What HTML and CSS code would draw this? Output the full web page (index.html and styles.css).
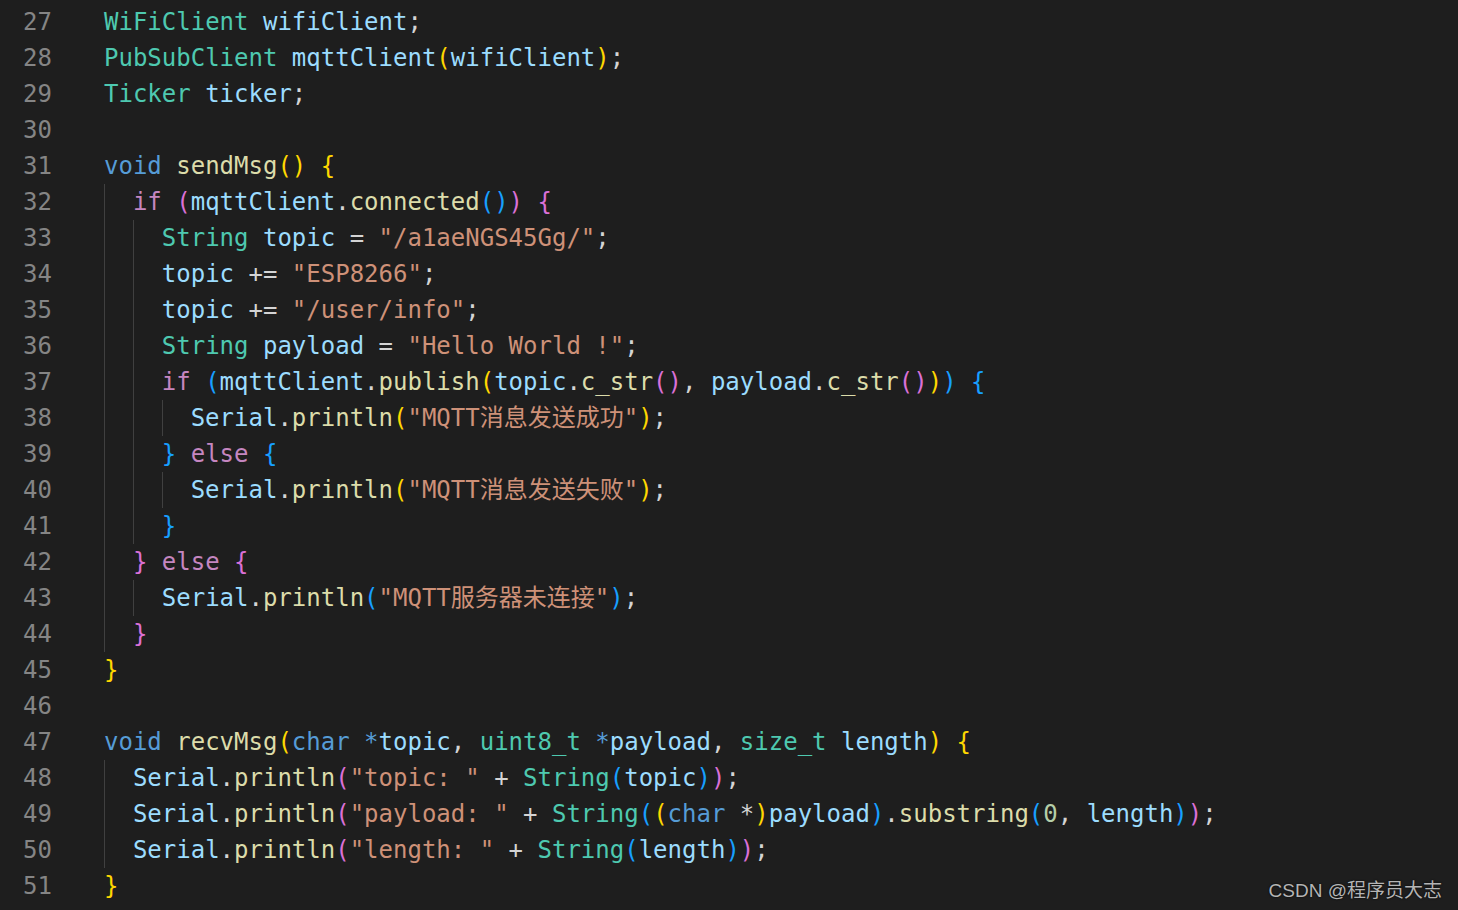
FILE: index.html
```html
<!DOCTYPE html>
<html lang="zh">
<head>
<meta charset="utf-8">
<title>code</title>
<link rel="stylesheet" href="styles.css">
</head>
<body>
<div class="editor">
  <div class="line"><span class="ln">27</span><span class="code"><span class="t">WiFiClient</span> <span class="v">wifiClient</span><span class="p">;</span></span></div>
  <div class="line"><span class="ln">28</span><span class="code"><span class="t">PubSubClient</span> <span class="v">mqttClient</span><span class="b1">(</span><span class="v">wifiClient</span><span class="b1">)</span><span class="p">;</span></span></div>
  <div class="line"><span class="ln">29</span><span class="code"><span class="t">Ticker</span> <span class="v">ticker</span><span class="p">;</span></span></div>
  <div class="line"><span class="ln">30</span><span class="code"></span></div>
  <div class="line"><span class="ln">31</span><span class="code"><span class="k">void</span> <span class="f">sendMsg</span><span class="b1">()</span> <span class="b1">{</span></span></div>
  <div class="line"><span class="ln">32</span><span class="code"><span class="ind"></span><span class="c">if</span> <span class="b2">(</span><span class="v">mqttClient</span><span class="p">.</span><span class="f">connected</span><span class="b3">()</span><span class="b2">)</span> <span class="b2">{</span></span></div>
  <div class="line"><span class="ln">33</span><span class="code"><span class="ind"></span><span class="ind"></span><span class="t">String</span> <span class="v">topic</span> <span class="p">=</span> <span class="s">"/a1aeNGS45Gg/"</span><span class="p">;</span></span></div>
  <div class="line"><span class="ln">34</span><span class="code"><span class="ind"></span><span class="ind"></span><span class="v">topic</span> <span class="p">+=</span> <span class="s">"ESP8266"</span><span class="p">;</span></span></div>
  <div class="line"><span class="ln">35</span><span class="code"><span class="ind"></span><span class="ind"></span><span class="v">topic</span> <span class="p">+=</span> <span class="s">"/user/info"</span><span class="p">;</span></span></div>
  <div class="line"><span class="ln">36</span><span class="code"><span class="ind"></span><span class="ind"></span><span class="t">String</span> <span class="v">payload</span> <span class="p">=</span> <span class="s">"Hello World !"</span><span class="p">;</span></span></div>
  <div class="line"><span class="ln">37</span><span class="code"><span class="ind"></span><span class="ind"></span><span class="c">if</span> <span class="b3">(</span><span class="v">mqttClient</span><span class="p">.</span><span class="f">publish</span><span class="b1">(</span><span class="v">topic</span><span class="p">.</span><span class="f">c_str</span><span class="b2">()</span><span class="p">,</span> <span class="v">payload</span><span class="p">.</span><span class="f">c_str</span><span class="b2">()</span><span class="b1">)</span><span class="b3">)</span> <span class="b3">{</span></span></div>
  <div class="line"><span class="ln">38</span><span class="code"><span class="ind"></span><span class="ind"></span><span class="ind"></span><span class="v">Serial</span><span class="p">.</span><span class="f">println</span><span class="b1">(</span><span class="s">"MQTT消息发送成功"</span><span class="b1">)</span><span class="p">;</span></span></div>
  <div class="line"><span class="ln">39</span><span class="code"><span class="ind"></span><span class="ind"></span><span class="b3">}</span> <span class="c">else</span> <span class="b3">{</span></span></div>
  <div class="line"><span class="ln">40</span><span class="code"><span class="ind"></span><span class="ind"></span><span class="ind"></span><span class="v">Serial</span><span class="p">.</span><span class="f">println</span><span class="b1">(</span><span class="s">"MQTT消息发送失败"</span><span class="b1">)</span><span class="p">;</span></span></div>
  <div class="line"><span class="ln">41</span><span class="code"><span class="ind"></span><span class="ind"></span><span class="b3">}</span></span></div>
  <div class="line"><span class="ln">42</span><span class="code"><span class="ind"></span><span class="b2">}</span> <span class="c">else</span> <span class="b2">{</span></span></div>
  <div class="line"><span class="ln">43</span><span class="code"><span class="ind"></span><span class="ind"></span><span class="v">Serial</span><span class="p">.</span><span class="f">println</span><span class="b3">(</span><span class="s">"MQTT服务器未连接"</span><span class="b3">)</span><span class="p">;</span></span></div>
  <div class="line"><span class="ln">44</span><span class="code"><span class="ind"></span><span class="b2">}</span></span></div>
  <div class="line"><span class="ln">45</span><span class="code"><span class="b1">}</span></span></div>
  <div class="line"><span class="ln">46</span><span class="code"></span></div>
  <div class="line"><span class="ln">47</span><span class="code"><span class="k">void</span> <span class="f">recvMsg</span><span class="b1">(</span><span class="k">char</span> <span class="k">*</span><span class="v">topic</span><span class="p">,</span> <span class="t">uint8_t</span> <span class="k">*</span><span class="v">payload</span><span class="p">,</span> <span class="t">size_t</span> <span class="v">length</span><span class="b1">)</span> <span class="b1">{</span></span></div>
  <div class="line"><span class="ln">48</span><span class="code"><span class="ind"></span><span class="v">Serial</span><span class="p">.</span><span class="f">println</span><span class="b2">(</span><span class="s">"topic: "</span> <span class="o">+</span> <span class="t">String</span><span class="b3">(</span><span class="v">topic</span><span class="b3">)</span><span class="b2">)</span><span class="p">;</span></span></div>
  <div class="line"><span class="ln">49</span><span class="code"><span class="ind"></span><span class="v">Serial</span><span class="p">.</span><span class="f">println</span><span class="b2">(</span><span class="s">"payload: "</span> <span class="o">+</span> <span class="t">String</span><span class="b3">(</span><span class="b1">(</span><span class="k">char</span> <span class="p">*</span><span class="b1">)</span><span class="v">payload</span><span class="b3">)</span><span class="p">.</span><span class="f">substring</span><span class="b3">(</span><span class="n">0</span><span class="p">,</span> <span class="v">length</span><span class="b3">)</span><span class="b2">)</span><span class="p">;</span></span></div>
  <div class="line"><span class="ln">50</span><span class="code"><span class="ind"></span><span class="v">Serial</span><span class="p">.</span><span class="f">println</span><span class="b2">(</span><span class="s">"length: "</span> <span class="o">+</span> <span class="t">String</span><span class="b3">(</span><span class="v">length</span><span class="b3">)</span><span class="b2">)</span><span class="p">;</span></span></div>
  <div class="line"><span class="ln">51</span><span class="code"><span class="b1">}</span></span></div>
</div>
<div class="watermark">CSDN @程序员大志</div>
</body>
</html>
```

FILE: styles.css
```css
html, body {
  margin: 0;
  padding: 0;
  background: #1e1e1e;
  height: 100%;
  overflow: hidden;
}

.editor {
  padding-top: 4px;
  font-family: "DejaVu Sans Mono", "Noto Sans CJK SC", monospace;
  font-size: 24px;
  line-height: 36px;
  color: #d4d4d4;
}

.line {
  display: flex;
  height: 36px;
  white-space: pre;
}

.ln {
  width: 52px;
  text-align: right;
  color: #858585;
  flex: none;
}

.code {
  display: block;
  padding-left: 52px;
}

.ind {
  display: inline-block;
  vertical-align: top;
  width: 2ch;
  height: 36px;
  box-sizing: border-box;
  border-left: 1px solid #404040;
}

.t { color: #4ec9b0; }
.v { color: #9cdcfe; }
.k { color: #569cd6; }
.c { color: #c586c0; }
.f { color: #dcdcaa; }
.s { color: #ce9178; }
.n { color: #b5cea8; }
.p { color: #d4d4d4; }
.o { color: #d4d4d4; }
.b1 { color: #ffd700; }
.b2 { color: #da70d6; }
.b3 { color: #179fff; }

.watermark {
  position: absolute;
  right: 16px;
  bottom: 8px;
  font-family: "Liberation Sans", "Noto Sans CJK SC", sans-serif;
  font-size: 19px;
  color: #b4b4b4;
  text-shadow: 0 0 2px #000;
}
```
